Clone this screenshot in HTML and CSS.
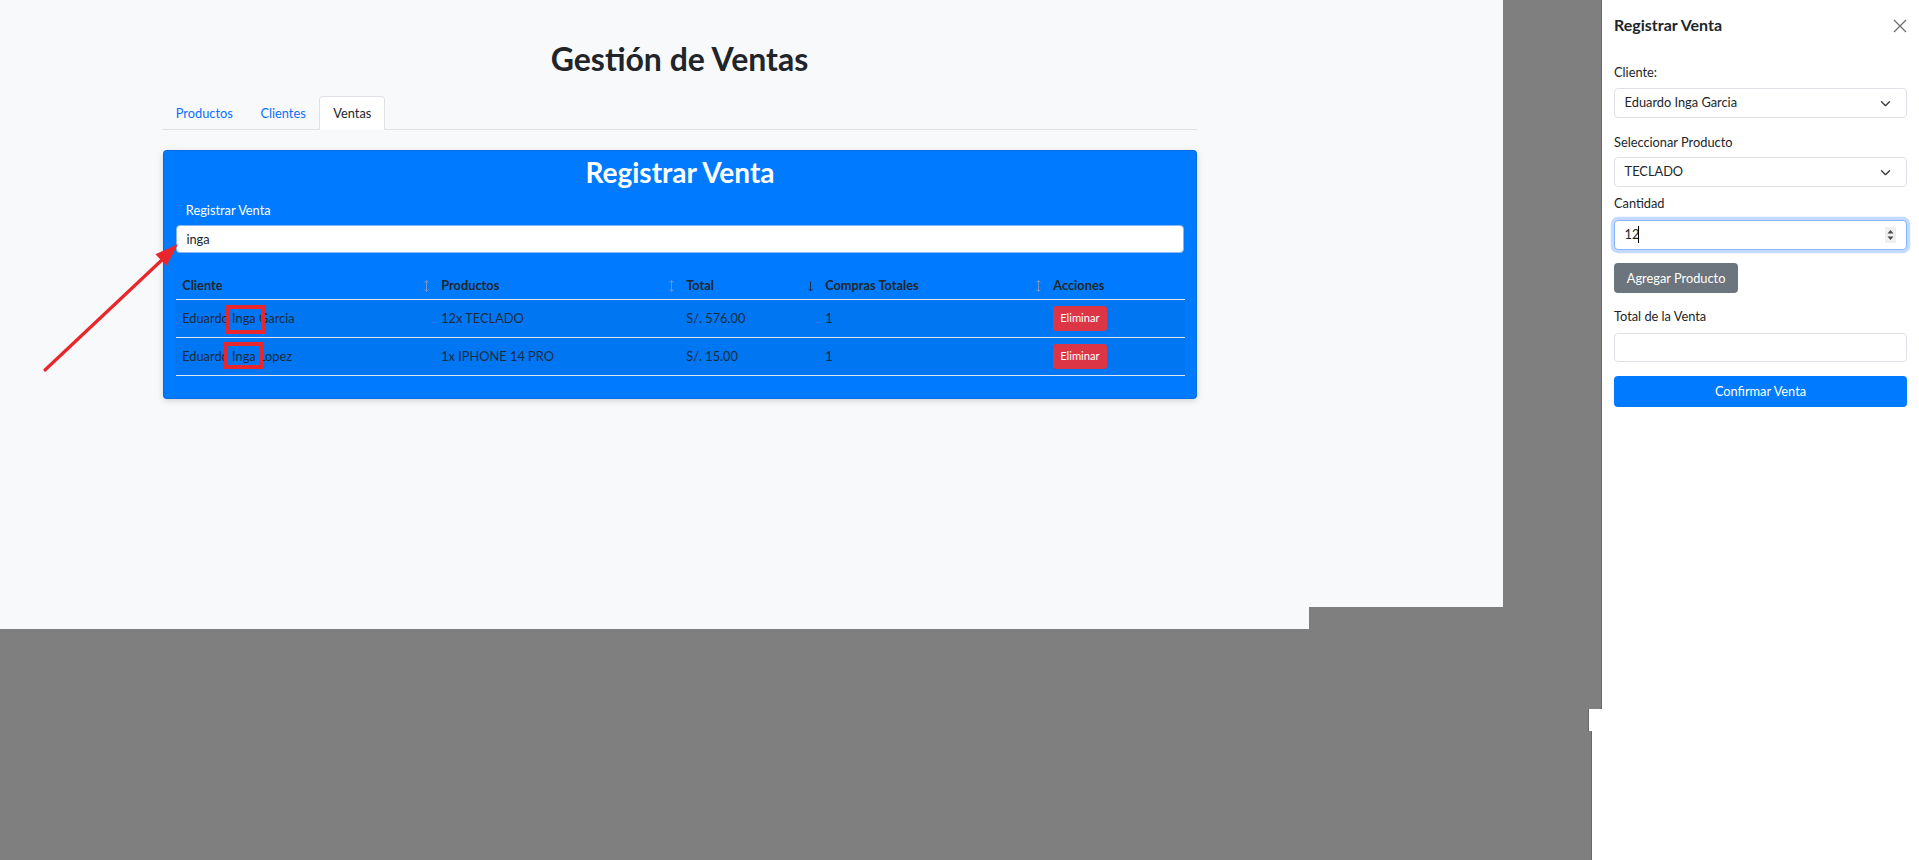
FILE: index.html
```html
<!DOCTYPE html>
<html lang="es">
<head>
<meta charset="utf-8">
<title>Gestión de Ventas</title>
<link rel="stylesheet" href="styles.css">
</head>
<body>
<div class="page">
  <div class="container">
    <h1 class="title">Gestión de Ventas</h1>
    <ul class="tabs">
      <li class="tab">Productos</li>
      <li class="tab">Clientes</li>
      <li class="tab tab-active">Ventas</li>
    </ul>
    <div class="card">
      <h2 class="card-title">Registrar Venta</h2>
      <div class="search-label">Registrar Venta</div>
      <div class="search">inga</div>
      <table class="sales">
        <colgroup>
          <col class="c1"><col class="c2"><col class="c3"><col class="c4"><col class="c5">
        </colgroup>
        <thead>
          <tr>
            <th>Cliente<span class="sort"><svg viewBox="0 0 7 14" width="7" height="14"><path d="M3.5 1.5V12.5M1.5 3.5L3.5 1.5L5.5 3.5M1.5 10.5L3.5 12.5L5.5 10.5" fill="none" stroke="currentColor" stroke-width="1"/></svg></span></th>
            <th>Productos<span class="sort"><svg viewBox="0 0 7 14" width="7" height="14"><path d="M3.5 1.5V12.5M1.5 3.5L3.5 1.5L5.5 3.5M1.5 10.5L3.5 12.5L5.5 10.5" fill="none" stroke="currentColor" stroke-width="1"/></svg></span></th>
            <th>Total<span class="sort sort-active"><svg viewBox="0 0 7 14" width="7" height="14"><path d="M3.5 2.5V12M1.5 10L3.5 12L5.5 10" fill="none" stroke="currentColor" stroke-width="1"/></svg></span></th>
            <th>Compras Totales<span class="sort"><svg viewBox="0 0 7 14" width="7" height="14"><path d="M3.5 1.5V12.5M1.5 3.5L3.5 1.5L5.5 3.5M1.5 10.5L3.5 12.5L5.5 10.5" fill="none" stroke="currentColor" stroke-width="1"/></svg></span></th>
            <th>Acciones</th>
          </tr>
        </thead>
        <tbody>
          <tr>
            <td>Eduardo Inga Garcia</td>
            <td>12x TECLADO</td>
            <td>S/. 576.00</td>
            <td>1</td>
            <td><span class="btn-danger">Eliminar</span></td>
          </tr>
          <tr>
            <td>Eduardo Inga Lopez</td>
            <td>1x IPHONE 14 PRO</td>
            <td>S/. 15.00</td>
            <td>1</td>
            <td><span class="btn-danger">Eliminar</span></td>
          </tr>
        </tbody>
      </table>
    </div>
  </div>
  <div class="page-notch"></div>
  <svg class="arrow" width="200" height="400" viewBox="0 0 200 400">
    <line x1="45" y1="370" x2="164" y2="258" stroke="#e8262b" stroke-width="3.2" stroke-linecap="round"/>
    <polygon points="178,244 166.5,266 155.5,254.3" fill="#e8262b"/>
  </svg>
  <div class="mark mark-1"></div>
  <div class="mark mark-2"></div>
</div>

<aside class="offcanvas">
  <div class="offcanvas-tail"></div>
  <div class="offcanvas-foot"></div>
  <div class="oc-header">
    <h5 class="oc-title">Registrar Venta</h5>
    <svg class="oc-close" width="14" height="14" viewBox="0 0 14 14"><path d="M1 1L13 13M13 1L1 13" stroke="#6f6f6f" stroke-width="1.3" fill="none"/></svg>
  </div>
  <div class="oc-body">
    <div class="label l1">Cliente:</div>
    <div class="control sel s1"><span>Eduardo Inga Garcia</span><svg width="11" height="8" viewBox="0 0 16 12"><path d="M2 4l6 6 6-6" fill="none" stroke="#343a40" stroke-width="2" stroke-linecap="round" stroke-linejoin="round"/></svg></div>
    <div class="label l2">Seleccionar Producto</div>
    <div class="control sel s2"><span>TECLADO</span><svg width="11" height="8" viewBox="0 0 16 12"><path d="M2 4l6 6 6-6" fill="none" stroke="#343a40" stroke-width="2" stroke-linecap="round" stroke-linejoin="round"/></svg></div>
    <div class="label l3">Cantidad</div>
    <div class="control focus n1"><span>12</span><i class="caret"></i><span class="spin"><svg width="11" height="16" viewBox="0 0 11 16"><rect width="11" height="16" fill="#efefef"/><path d="M2.5 6.5L5.5 3L8.5 6.5Z M2.5 9.5L5.5 13L8.5 9.5Z" fill="#4a4a4a"/></svg></span></div>
    <div class="btn-secondary">Agregar Producto</div>
    <div class="label l4">Total de la Venta</div>
    <div class="control t1"></div>
    <div class="btn-primary">Confirmar Venta</div>
  </div>
</aside>
</body>
</html>
```

FILE: styles.css
```css
* { box-sizing: border-box; }
html, body { margin: 0; padding: 0; }
body {
  background: #7f7f7f;
  font-family: Lato, "Noto Sans", sans-serif;
  font-size: 12.8px;
  line-height: 1.5;
  color: #212529;
  width: 1919px;
  height: 860px;
  overflow: hidden;
  position: relative;
}

.page {
  width: 1503px;
  height: 629px;
  background: #f8f9fa;
  position: relative;
}
.page-notch {
  position: absolute;
  left: 1309px;
  top: 607px;
  width: 194px;
  height: 22px;
  background: #7f7f7f;
}

.container {
  margin-left: 162px;
  width: 1035px;
  padding-top: 39.5px;
}
.title {
  margin: 0 0 18.4px;
  text-align: center;
  font-size: 32px;
  line-height: 1.2;
  font-weight: 700;
  color: #212529;
}

.tabs {
  list-style: none;
  margin: 0;
  padding: 0;
  display: flex;
  border-bottom: 1px solid #dee2e6;
}
.tab {
  padding: 6.4px 12.8px;
  border: 1px solid transparent;
  border-top-left-radius: 4px;
  border-top-right-radius: 4px;
  margin-bottom: -1px;
  color: #0d6efd;
  line-height: 19.2px;
}
.tab-active {
  background: #fff;
  border-color: #dee2e6 #dee2e6 #fff;
  color: #212529;
}

.card {
  margin-top: 19.4px;
  margin-left: 1px;
  background: #007bff;
  border: 1px solid rgba(0,0,0,0.12);
  border-radius: 4px;
  box-shadow: 0 2px 6px rgba(0,0,0,0.15);
  padding: 5.8px 11.8px 21.5px;
}
.card-title {
  margin: 0;
  text-align: center;
  color: #fff;
  font-size: 28px;
  line-height: 1.2;
  font-weight: 700;
}
.search-label {
  margin-top: 10.6px;
  padding-left: 10px;
  color: #fff;
  line-height: 19.2px;
}
.search {
  margin-top: 5.4px;
  height: 28px;
  background: #fff;
  border: 1px solid #8ab8f5;
  border-radius: 4px;
  padding: 0 9.6px;
  line-height: 26px;
  color: #212529;
}

.sales {
  margin-top: 14px;
  width: 1009px;
  border-collapse: collapse;
  table-layout: fixed;
}
.c1 { width: 259px; }
.c2 { width: 245px; }
.c3 { width: 139px; }
.c4 { width: 228px; }
.c5 { width: 138px; }
.sales th {
  position: relative;
  text-align: left;
  font-weight: 700;
  padding: 8.4px 6.4px 4px;
  line-height: 19.2px;
  border-bottom: 1px solid #e3ebf5;
}
.sales td {
  padding: 6.4px;
  line-height: 19.2px;
  height: 38px;
  background: #0076f2;
  border-bottom: 1px solid #dfe7f1;
  color: #1d2b3e;
}
.sort {
  position: absolute;
  right: 5px;
  top: 12px;
  color: #7894c0;
  display: flex;
}
.sort-active { color: #1f2a3a; }

.btn-danger {
  display: inline-block;
  background: #dc3545;
  color: #fff;
  font-size: 11.2px;
  line-height: 16.8px;
  padding: 3.8px 7px;
  border-radius: 3.2px;
  vertical-align: middle;
}

.arrow {
  position: absolute;
  left: 0;
  top: 0;
}
.mark {
  position: absolute;
  border: 4px solid #e8262b;
}
.mark-1 { left: 226px; top: 305px; width: 39px; height: 29px; }
.mark-2 { left: 224px; top: 342px; width: 39px; height: 27px; }

/* offcanvas */
.offcanvas {
  position: absolute;
  top: 0;
  right: 0;
  width: 318px;
  height: 860px;
  background: #fff;
  border-left: 1px solid #6a6a6a;
  padding: 0 12px 0 12px;
}
.offcanvas-tail {
  position: absolute;
  left: -14px;
  top: 709px;
  width: 14px;
  height: 22px;
  background: #fff;
  border-left: 1px solid #6a6a6a;
}
.offcanvas-foot {
  position: absolute;
  left: -11px;
  top: 731px;
  width: 11px;
  height: 129px;
  background: #fff;
  border-left: 1px solid #6a6a6a;
}
.oc-header {
  display: flex;
  justify-content: space-between;
  align-items: center;
  padding-top: 15px;
}
.oc-title {
  margin: 0;
  font-size: 16px;
  line-height: 19.2px;
  font-weight: 700;
  color: #212529;
}
.oc-close { margin-right: 0; margin-top: 2px; }
.oc-body { padding-top: 29.2px; }
.label { line-height: 19.2px; color: #212529; }
.l1 { margin-bottom: 5.4px; }
.l2 { margin-bottom: 4.4px; }
.l3 { margin-bottom: 6.4px; }
.l4 { margin-bottom: 6.4px; }

.control {
  height: 30px;
  border: 1px solid #dee2e6;
  border-radius: 4px;
  padding: 0 9.6px;
  display: flex;
  align-items: center;
  justify-content: space-between;
  color: #212529;
  background: #fff;
}
.s1 { margin-bottom: 15.4px; }
.s2 { margin-bottom: 7.4px; }
.sel svg { margin-right: 5px; }
.focus {
  border-color: #86b7fe;
  box-shadow: 0 0 0 3.2px rgba(13,110,253,0.25);
  justify-content: flex-start;
  margin-bottom: 13px;
  position: relative;
}
.caret {
  display: inline-block;
  width: 1px;
  height: 17px;
  background: #000;
  margin-left: -1px;
}
.spin {
  position: absolute;
  right: 10px;
  top: 6px;
  display: flex;
}
.t1 { height: 29px; margin-bottom: 14px; }

.btn-secondary {
  display: inline-block;
  background: #6c757d;
  color: #fff;
  border-radius: 4px;
  height: 30px;
  line-height: 30px;
  padding: 0 12.8px;
  margin-bottom: 14.4px;
}
.btn-primary {
  background: #007bff;
  color: #fff;
  border-radius: 4px;
  height: 31px;
  line-height: 31px;
  text-align: center;
}
```
